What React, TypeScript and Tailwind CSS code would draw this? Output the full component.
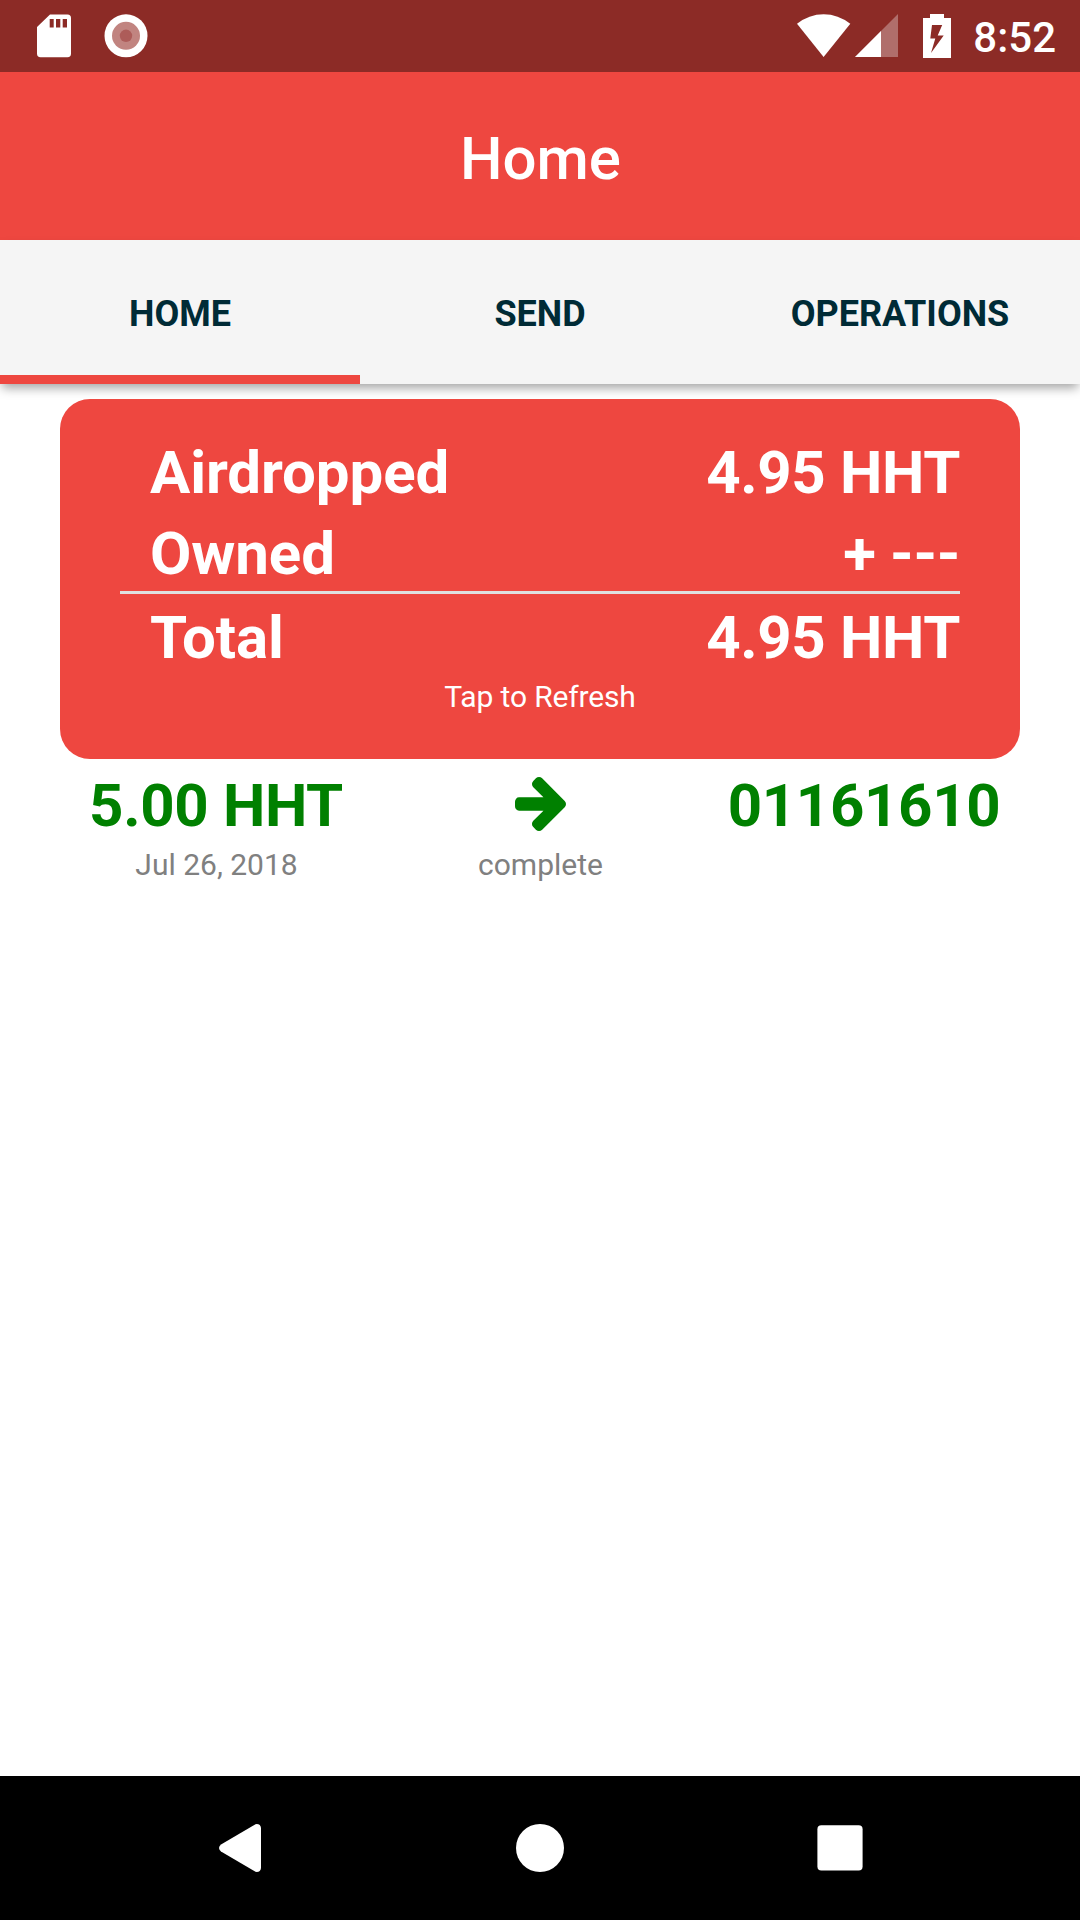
import { useState } from "react";

const tabs = ["HOME", "SEND", "OPERATIONS"];

const operations = [
  { id: 1, amount: "5.00 HHT", date: "Jul 26, 2018", status: "complete", account: "01161610" },
];

function StatusBar() {
  return (
    <div className="h-[72px] shrink-0 bg-[#8c2b26] flex items-start justify-between pl-[37px] pr-6 text-white">
      <div className="flex items-center gap-[33px] pt-[14px]">
        <svg width="34" height="44" viewBox="0 0 34 44">
          <path
            fill="currentColor"
            fillRule="evenodd"
            d="M13 .5H30.5Q34 .5 34 4V39.5Q34 43.3 30.5 43.3H3.5Q0 43.3 0 39.5V13ZM12.7 5V13.5H16.7V5ZM19 5V13.5H23.3V5ZM25.7 5V13.5H30V5Z"
          />
        </svg>
        <svg width="44" height="44" viewBox="0 0 44 44">
          <circle cx="22" cy="21.8" r="21.5" fill="#fff" />
          <circle cx="22" cy="21.8" r="14" fill="#c18480" />
          <circle cx="22" cy="21.8" r="6.2" fill="#ad5c59" />
        </svg>
      </div>
      <div className="flex items-start pt-[14px]">
        <svg width="54" height="44" viewBox="0 0 54 44">
          <path fill="currentColor" d="M0 9.8Q12 .2 26.6 .2T53.3 9.8L26.6 43Z" />
        </svg>
        <svg className="ml-1" width="44" height="44" viewBox="0 0 44 44">
          <path fill="#b06e6b" d="M43 0V43H0Z" />
          <path fill="currentColor" d="M26 17V43H0Z" />
        </svg>
        <svg className="ml-6" width="28" height="44" viewBox="0 0 28 44">
          <path
            fill="currentColor"
            fillRule="evenodd"
            d="M7 0H21V4H28V44H0V4H7ZM9 11L7.3 24.5H12.3L8 39L20.7 21.5H14.7L19.2 11Z"
          />
        </svg>
        <span className="ml-[22px] pt-px text-[42px] leading-[46px] font-medium">8:52</span>
      </div>
    </div>
  );
}

function BalanceRow({ label, value }: { label: string; value: string }) {
  return (
    <div className="flex justify-between pl-[30px] text-[60px] leading-[81px] font-bold">
      <span className="tracking-[-0.08px]">{label}</span>
      <span className="tracking-[-0.35px]">{value}</span>
    </div>
  );
}

function ArrowIcon() {
  return (
    <svg width="51" height="54" viewBox="0 21 1472 1558">
      <path
        fill="currentColor"
        d="M1472 800q0 54-37 91l-651 651q-39 37-91 37-51 0-90-37l-75-75q-38-38-38-91t38-91l293-293h-704q-52 0-84.5-37.5t-32.5-90.5v-128q0-53 32.5-90.5t84.5-37.5h704l-293-294q-38-36-38-90t38-90l75-75q38-38 90-38 53 0 91 38l651 651q37 35 37 90z"
      />
    </svg>
  );
}

function NavBar() {
  return (
    <div className="h-36 shrink-0 bg-black px-[90px] grid grid-cols-3 items-center justify-items-center text-white">
      <svg width="42" height="48" viewBox="0 0 42 48">
        <path fill="currentColor" d="M42 4V44Q41.5 48.500 36.500 47.800L2 27.500Q-2 24 2 20.500L36.500 .200Q41.500 -.500 42 4Z" />
      </svg>
      <div className="size-12 rounded-full bg-white"></div>
      <svg width="46" height="46" viewBox="0 0 46 46">
        <rect x=".4" y=".2" width="45.200" height="45.200" rx="4" fill="currentColor" />
      </svg>
    </div>
  );
}

export default function App() {
  const [active, setActive] = useState("HOME");

  return (
    <div className="w-[1080px] h-[1920px] flex flex-col bg-white overflow-hidden font-[Roboto,sans-serif]">
      <StatusBar />
      <header className="h-[168px] shrink-0 bg-[#ee4740] flex items-center justify-center pl-px pt-[5px]">
        <h1 className="text-[60px] leading-[70px] font-medium text-white">Home</h1>
      </header>

      <nav className="h-36 shrink-0 grid grid-cols-3 bg-[#f5f5f5] shadow-[0_6px_10px_-2px_rgba(0,0,0,0.36)]">
        {
          tabs.map((tab)=>(
            <button
            key={tab}
            onClick={()=>setActive(tab)}
            className={`border-b-[9px] pt-[13px] text-[36px] font-bold text-[#002b36] cursor-pointer ${active===tab ? "border-[#ee4740]" : "border-transparent"}`}
            >
              {tab}
            </button>
          ))
        }
      </nav>

      <main className="flex-1 pt-[15px]">
        <div className="relative mx-[60px] h-[360px] rounded-[30px] bg-[#ee4740] px-[60px] pt-[33px] text-white cursor-pointer">
          <BalanceRow label="Airdropped" value="4.95 HHT" />
          <BalanceRow label="Owned" value="+ ---" />
          <div className="-mt-[3px] mb-[3px] h-[3px] bg-[#e0e0e0]"></div>
          <BalanceRow label="Total" value="4.95 HHT" />
          <p className="text-center text-[30px] leading-[38px] tracking-[-0.15px]">Tap to Refresh</p>
        </div>

        {
          operations.map((op)=>(
            <div key={op.id} className="grid grid-cols-3 px-[54px] pt-[6px] text-center">
              <div>
                <p className="pt-px text-[60px] leading-[79px] font-bold tracking-[-0.35px] text-[#008000]">{op.amount}</p>
                <p className="pl-px text-[30px] leading-[40px] text-[#808080]">{op.date}</p>
              </div>
              <div>
                <div className="h-20 pb-[2px] flex items-center justify-center text-[#008000]">
                  <ArrowIcon />
                </div>
                <p className="pl-px text-[30px] leading-[40px] text-[#808080]">{op.status}</p>
              </div>
              <p className="pt-px text-[60px] leading-[79px] font-bold tracking-[-0.35px] text-[#008000]">{op.account}</p>
            </div>
          ))
        }
      </main>

      <NavBar />
    </div>
  );
}
